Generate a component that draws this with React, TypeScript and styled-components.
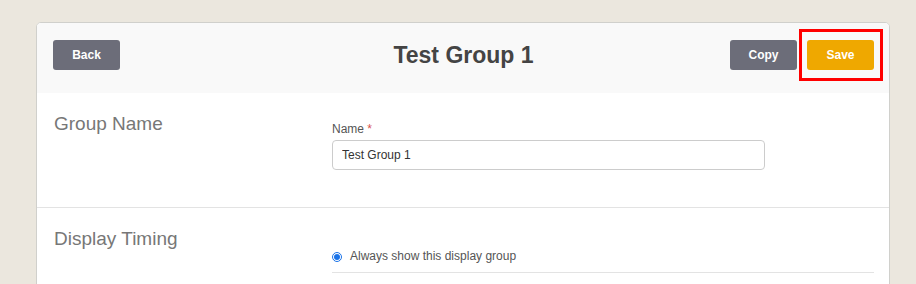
import React from 'react'
import styled, {createGlobalStyle} from 'styled-components'

const Global = createGlobalStyle`
  html, body {
    margin: 0;
    height: 284px;
    overflow: hidden;
    background: #ebe7de;
    font-family: 'Liberation Sans', Arial, sans-serif;
  }
`

const App: React.FC = () => {
  return (
    <Page>
      <Global />
      <Card>
        <Header>
          <HeaderSide>
            <Button>Back</Button>
          </HeaderSide>
          <Title>Test Group 1</Title>
          <HeaderSide align="end">
            <Button>Copy</Button>
            <Highlight>
              <Button primary>Save</Button>
            </Highlight>
          </HeaderSide>
        </Header>

        <Section>
          <SectionLabel>Group Name</SectionLabel>
          <Fields top={29} bottom={37}>
            <FieldLabel>
              Name <Required>*</Required>
            </FieldLabel>
            <TextInput defaultValue="Test Group 1" />
          </Fields>
        </Section>

        <Section>
          <SectionLabel>Display Timing</SectionLabel>
          <Fields top={40} bottom={40}>
            <RadioRow>
              <Radio type="radio" name="timing" defaultChecked />
              Always show this display group
            </RadioRow>
          </Fields>
        </Section>
      </Card>
    </Page>
  )
}

export default App


const Page = styled('div')`
  padding: 22px 0 0 36px;
`

const Card = styled('div')`
  box-sizing: border-box;
  width: 854px;
  background: #fff;
  border: 1px solid #d0d0cc;
  border-radius: 5px;
  overflow: hidden;
`

const Header = styled('div')`
  display: grid;
  grid-template-columns: 1fr auto 1fr;
  align-items: center;
  padding: 17px 15px 23px 16px;
  background: #f9f9f9;
`

const HeaderSide = styled('div')<{
  align?: 'end'
}>`
  display: flex;
  align-items: center;
  gap: 10px;
  justify-content: ${props => (props.align === 'end' ? 'flex-end' : 'flex-start')};
`

const Title = styled('h1')`
  margin: 0;
  font-size: 23px;
  font-weight: bold;
  color: #444;
  line-height: 30px;
`

const Button = styled('button')<{
  primary?: boolean
}>`
  width: 67px;
  height: 30px;
  border: none;
  border-radius: 3px;
  background: ${props => (props.primary ? '#efa800' : '#6c6d79')};
  color: #fff;
  font-family: 'Liberation Sans', Arial, sans-serif;
  font-size: 12px;
  font-weight: bold;
  padding: 0;
  cursor: pointer;
`

const Highlight = styled('span')`
  position: relative;
  display: flex;

  &::after {
    content: '';
    position: absolute;
    left: -8px;
    right: -9px;
    top: -11px;
    bottom: -11px;
    border: 3px solid #ff0000;
    pointer-events: none;
  }
`

const Section = styled('div')`
  display: grid;
  grid-template-columns: 278px 1fr;
  padding: 0 15px 0 17px;
  border-bottom: 1px solid #e3e3e3;
`

const SectionLabel = styled('div')`
  padding-top: 20px;
  font-size: 19px;
  line-height: 22px;
  color: #777;
`

const Fields = styled('div')<{
  top: number
  bottom: number
}>`
  padding: ${props => props.top}px 0 ${props => props.bottom}px;
`

const FieldLabel = styled('label')`
  display: block;
  margin-bottom: 3px;
  font-size: 12px;
  line-height: 15px;
  color: #555;
`

const Required = styled('span')`
  color: #d9534f;
`

const TextInput = styled('input')`
  box-sizing: border-box;
  width: 433px;
  height: 30px;
  padding: 0 9px;
  border: 1px solid #ccc;
  border-radius: 4px;
  font-family: 'Liberation Sans', Arial, sans-serif;
  font-size: 12px;
  color: #333;
  outline: none;
`

const RadioRow = styled('label')`
  display: flex;
  align-items: center;
  gap: 8px;
  padding: 1px 0 8px;
  border-bottom: 1px solid #e3e3e3;
  font-size: 12px;
  line-height: 15px;
  color: #555;
`

const Radio = styled('input')`
  width: 10px;
  height: 10px;
  margin: 0;
  accent-color: #1a73e8;
`
